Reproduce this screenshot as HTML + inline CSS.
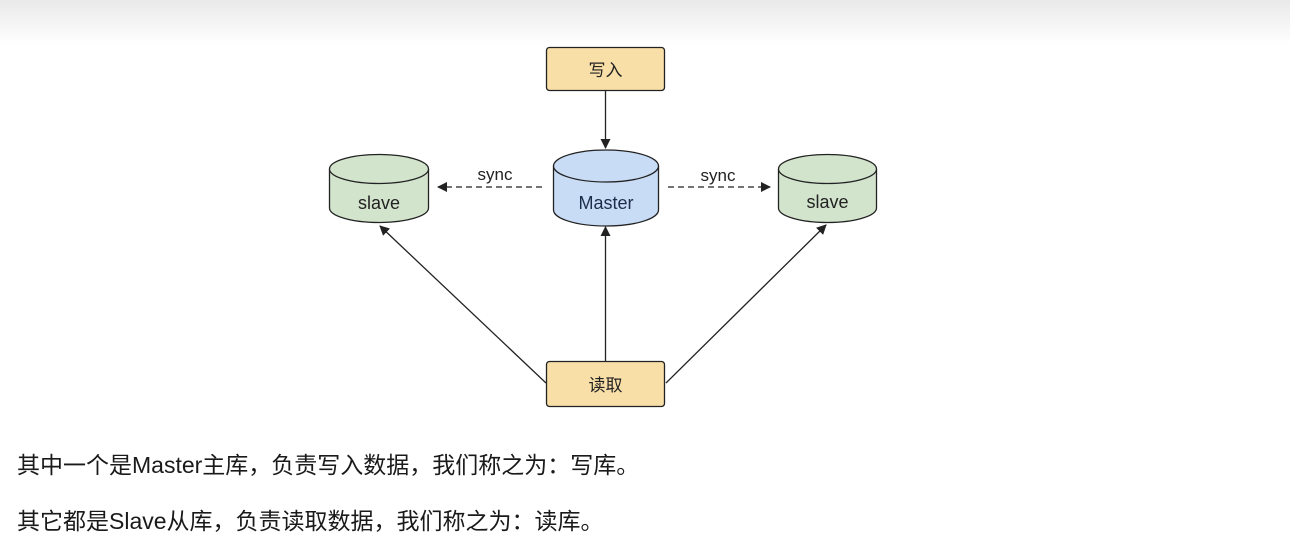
<!DOCTYPE html>
<html><head><meta charset="utf-8"><style>
html,body{margin:0;padding:0;width:1290px;height:544px;overflow:hidden;background:#fff}
.top{position:absolute;left:0;top:0;width:1290px;height:45px;background:linear-gradient(#e9e9e9,#fff)}
svg{position:absolute;left:0;top:0}
.t{position:absolute;left:17px;font:23px "Liberation Sans Narrow","Liberation Sans","Noto Sans CJK SC",sans-serif;color:#1a1a1a;white-space:nowrap;line-height:28px}
</style></head><body>
<div class="top"></div>
<svg width="1290" height="544" viewBox="0 0 1290 544" font-family="Liberation Sans, Noto Sans CJK SC, sans-serif">
<defs><marker id="a" markerWidth="10" markerHeight="10" refX="9" refY="5" orient="auto" markerUnits="userSpaceOnUse"><path d="M0,0 L10,5 L0,10 Z" fill="#222"/></marker></defs>
<rect x="546.5" y="47.5" width="118" height="43" rx="3" fill="#f8dfa8" stroke="#222" stroke-width="1.3"/>
<text x="605.5" y="76" font-size="17" text-anchor="middle" fill="#222">写入</text>
<line x1="605.5" y1="91" x2="605.5" y2="148" stroke="#222" stroke-width="1.3" marker-end="url(#a)"/>
<path d="M553.5,166 L553.5,210 A52.5,16 0 0 0 658.5,210 L658.5,166" fill="#c9dcf6" stroke="#222" stroke-width="1.3"/>
<ellipse cx="606" cy="166" rx="52.5" ry="16" fill="#c9dcf6" stroke="#222" stroke-width="1.3"/>
<text x="606" y="209" font-size="18" text-anchor="middle" fill="#1c2d4a">Master</text>
<path d="M329.5,169 L329.5,208 A49.5,14.5 0 0 0 428.5,208 L428.5,169" fill="#d3e4cd" stroke="#222" stroke-width="1.3"/>
<ellipse cx="379" cy="169" rx="49.5" ry="14.5" fill="#d3e4cd" stroke="#222" stroke-width="1.3"/>
<text x="379" y="209" font-size="18" text-anchor="middle" fill="#222">slave</text>
<path d="M778.5,169 L778.5,208 A49,14.5 0 0 0 876.5,208 L876.5,169" fill="#d3e4cd" stroke="#222" stroke-width="1.3"/>
<ellipse cx="827.5" cy="169" rx="49" ry="14.5" fill="#d3e4cd" stroke="#222" stroke-width="1.3"/>
<text x="827.5" y="208" font-size="18" text-anchor="middle" fill="#222">slave</text>
<line x1="542" y1="187" x2="438" y2="187" stroke="#222" stroke-width="1.3" stroke-dasharray="6,4" marker-end="url(#a)"/>
<text x="495" y="180" font-size="17" text-anchor="middle" fill="#222">sync</text>
<line x1="668" y1="187" x2="770" y2="187" stroke="#222" stroke-width="1.3" stroke-dasharray="6,4" marker-end="url(#a)"/>
<text x="718" y="181" font-size="17" text-anchor="middle" fill="#222">sync</text>
<rect x="546.5" y="361.5" width="118" height="45" rx="3" fill="#f8dfa8" stroke="#222" stroke-width="1.3"/>
<text x="605.5" y="391" font-size="17" text-anchor="middle" fill="#222">读取</text>
<line x1="605.5" y1="361" x2="605.5" y2="227" stroke="#222" stroke-width="1.3" marker-end="url(#a)"/>
<line x1="546" y1="383" x2="380" y2="226" stroke="#222" stroke-width="1.3" marker-end="url(#a)"/>
<line x1="666" y1="383" x2="826" y2="225" stroke="#222" stroke-width="1.3" marker-end="url(#a)"/>
</svg>
<div class="t" style="top:451px">其中一个是Master主库，负责写入数据，我们称之为：写库。</div>
<div class="t" style="top:507px">其它都是Slave从库，负责读取数据，我们称之为：读库。</div>
</body></html>
